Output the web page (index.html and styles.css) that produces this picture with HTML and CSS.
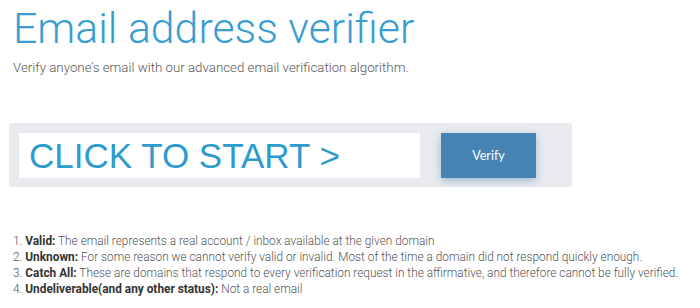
FILE: index.html
```html
<!DOCTYPE html>
<html lang="en">
<head>
<meta charset="utf-8">
<title>Email address verifier</title>
<link rel="stylesheet" href="styles.css">
</head>
<body>
<main class="page">
  <h1 class="title">Email address verifier</h1>
  <p class="subtitle">Verify anyone’s email with our advanced email verification algorithm.</p>
  <form class="verify-bar" onsubmit="return false">
    <input class="email-input" type="text" placeholder="CLICK TO START &gt;">
    <button class="verify-btn" type="submit">Verify</button>
  </form>
  <ol class="statuses">
    <li><b>Valid:</b> The email represents a real account / inbox available at the given domain</li>
    <li><b>Unknown:</b> For some reason we cannot verify valid or invalid. Most of the time a domain did not respond quickly enough.</li>
    <li><b>Catch All:</b> These are domains that respond to every verification request in the affirmative, and therefore cannot be fully verified.</li>
    <li><b>Undeliverable(and any other status):</b> Not a real email</li>
  </ol>
</main>
</body>
</html>
```
FILE: styles.css
```css
html, body {
  margin: 0;
  padding: 0;
  background: #ffffff;
}
.page {
  padding: 0 0 0 13px;
  font-family: Roboto, "Noto Sans", sans-serif;
}
.title {
  margin: 2px 0 0 0;
  font-family: Roboto, sans-serif;
  font-weight: 300;
  font-size: 42.8px;
  line-height: 52px;
  color: #389dd1;
  letter-spacing: 0;
}
.subtitle {
  margin: 4px 0 0 0;
  font-weight: 300;
  font-size: 13.3px;
  line-height: 20px;
  color: #5a5a5a;
}
.verify-bar {
  margin: 45px 0 0 -4px;
  width: 563px;
  height: 64px;
  box-sizing: border-box;
  padding: 10px 36px 9px 10px;
  background: #e9ebee;
  border-radius: 3px;
  display: flex;
  align-items: stretch;
  gap: 21px;
}
.email-input {
  width: 401px;
  box-sizing: border-box;
  border: none;
  outline: none;
  margin: 0;
  padding: 0 0 0 10px;
  background: #ffffff;
  font-family: "Liberation Sans", Arial, sans-serif;
  font-size: 35px;
  color: #2e9bcc;
}
.email-input::placeholder {
  color: #2e9bcc;
  opacity: 1;
}
.verify-btn {
  width: 95px;
  box-sizing: border-box;
  margin: 0;
  border: none;
  background: #4682b4;
  color: #ffffff;
  font-family: Lato, sans-serif;
  font-size: 12.5px;
  box-shadow: 0 3px 8px rgba(70, 130, 180, 0.45);
  cursor: pointer;
}
.statuses {
  margin: 46px 0 0 0;
  padding: 0;
  list-style-position: inside;
  font-weight: 300;
  font-size: 11.85px;
  line-height: 16px;
  color: #555555;
}
.statuses b {
  font-weight: 700;
  color: #333333;
}
```
